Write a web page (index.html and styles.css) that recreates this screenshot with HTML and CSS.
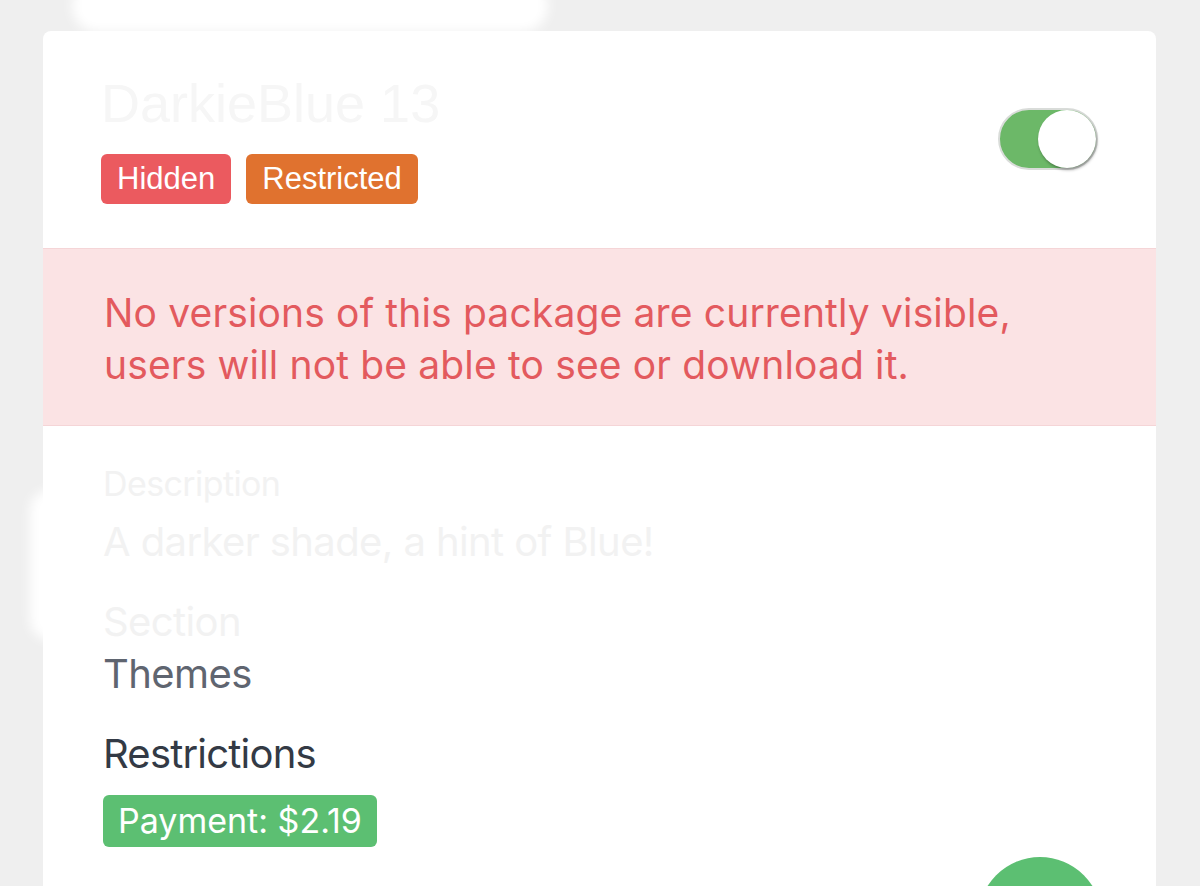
FILE: index.html
```html
<!DOCTYPE html>
<html lang="en">
<head>
    <meta charset="UTF-8">
    <meta name="viewport" content="width=device-width, initial-scale=1.0">
    <title>Package</title>
    <link rel="stylesheet" href="styles.css">
</head>
<body>
    <div class="smudge smudge-top"></div>
    <div class="smudge smudge-left"></div>

    <div class="card">
        <div class="card-header">
            <div class="header-info">
                <h1 class="title">DarkieBlue 13</h1>
                <div class="tags">
                    <span class="tag tag-hidden">Hidden</span>
                    <span class="tag tag-restricted">Restricted</span>
                </div>
            </div>
            <div class="switch">
                <div class="switch-knob"></div>
            </div>
        </div>

        <div class="alert">
            No versions of this package are currently visible,<br>
            users will not be able to see or download it.
        </div>

        <div class="card-body">
            <div class="field">
                <div class="field-label faint desc-label">Description</div>
                <div class="field-value faint">A darker shade, a hint of Blue!</div>
            </div>
            <div class="field">
                <div class="field-label faint">Section</div>
                <div class="field-value">Themes</div>
            </div>
            <div class="field">
                <h2 class="field-heading">Restrictions</h2>
                <span class="price">Payment: $2.19</span>
            </div>
        </div>

        <div class="fab"></div>
    </div>
</body>
</html>
```

FILE: styles.css
```css
html, body, h1, h2 {
    margin: 0;
    padding: 0;
}

html {
    overflow: hidden;
}

body {
    background: #efefef;
    font-family: 'Inter', 'Liberation Sans', sans-serif;
    padding: 31px 44px 0 43px;
    height: 886px;
    box-sizing: border-box;
    position: relative;
}

.smudge {
    position: absolute;
    background: #ffffff;
    filter: blur(6px);
    border-radius: 30px;
}

.smudge-top {
    left: 72px;
    top: -20px;
    width: 476px;
    height: 52px;
}

.smudge-left {
    left: 30px;
    top: 490px;
    width: 40px;
    height: 150px;
}

.card {
    position: relative;
    background: #fff;
    border-radius: 8px;
    min-height: 900px;
    overflow: hidden;
}

.card-header {
    display: flex;
    justify-content: space-between;
    align-items: center;
    padding: 44px 58px 44px 58px;
}

.title {
    font-family: 'Liberation Sans', sans-serif;
    font-weight: normal;
    font-size: 54px;
    line-height: 56px;
    color: #f6f6f6;
    margin-bottom: 23px;
}

.tags {
    display: flex;
    gap: 15px;
}

.tag {
    font-family: 'Liberation Sans', sans-serif;
    font-size: 31px;
    line-height: 50px;
    height: 50px;
    padding: 0 16px;
    color: #fff;
    border-radius: 6px;
}

.tag-hidden {
    background: #eb5a5f;
}

.tag-restricted {
    background: #e0722f;
}

.switch {
    width: 100px;
    height: 62px;
    box-sizing: border-box;
    border: 2px solid #d9dcd9;
    border-radius: 31px;
    background: #6cb868;
    display: flex;
    justify-content: flex-end;
    align-items: center;
    margin-top: -2px;
}

.switch-knob {
    width: 58px;
    height: 58px;
    border-radius: 50%;
    background: #fff;
    box-shadow: 1px 2px 3px rgba(0, 0, 0, 0.35);
}

.alert {
    background: #fbe3e4;
    border-top: 1px solid #f5d5d7;
    border-bottom: 1px solid #f5d5d7;
    color: #e35a5e;
    font-size: 39px;
    line-height: 52px;
    letter-spacing: 0.15px;
    padding: 38px 61px 34px 61px;
}

.card-body {
    padding: 32px 60px 0 60px;
}

.field {
    margin-bottom: 28px;
}

.field-label,
.field-value {
    font-size: 40px;
    line-height: 52px;
    letter-spacing: -0.6px;
    color: #5f6570;
}

.field .faint {
    color: #f2f2f2;
}

.desc-label {
    font-size: 34px;
    margin-bottom: 6px;
}

.field-heading {
    font-weight: normal;
    font-size: 40px;
    line-height: 52px;
    letter-spacing: -0.8px;
    color: #333a45;
    margin-bottom: 15px;
}

.price {
    display: inline-block;
    background: #5cbf72;
    color: #fff;
    font-size: 34px;
    line-height: 52px;
    height: 52px;
    padding: 0 15px;
    border-radius: 6px;
}

.fab {
    position: absolute;
    right: 54px;
    top: 826px;
    width: 124px;
    height: 124px;
    border-radius: 50%;
    background: #5cbf72;
}
```
